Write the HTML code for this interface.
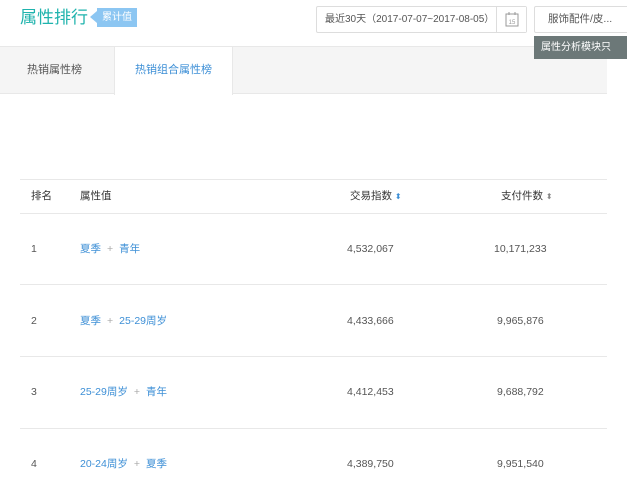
<!DOCTYPE html>
<html><head><meta charset="utf-8"><style>
*{margin:0;padding:0;box-sizing:border-box}
body{width:627px;height:485px;overflow:hidden;background:#fff;font-family:"Liberation Sans","Noto Sans CJK SC",sans-serif;position:relative;color:#555;font-size:11px}
.a{position:absolute}
.title{left:20px;top:7px;font-size:17px;color:#1fb3ad;line-height:22px}
.badge{left:97px;top:8px;width:40px;height:19px;background:#8cc6f2;color:#fff;font-size:10px;line-height:19px;text-align:center}
.badge:before{content:"";position:absolute;left:-7px;top:3px;border:6px solid transparent;border-right:7px solid #8cc6f2;border-left:0;height:0}
.date{left:316px;top:6px;width:211px;height:27px;border:1px solid #ddd;border-radius:2px;line-height:25px;padding-left:8px;color:#555;font-size:10px;white-space:nowrap}
.cal{position:absolute;right:0;top:0;width:30px;height:25px;border-left:1px solid #ddd;background:#fff}
.cat{left:534px;top:6px;width:100px;height:27px;border:1px solid #ddd;border-radius:2px;line-height:25px;padding-left:13px;color:#555;font-size:10.5px}
.tip{left:534px;top:36px;width:93px;height:23px;background:#6c7878;color:#fff;font-size:10px;line-height:23px;padding-left:7px;z-index:5;white-space:nowrap;overflow:hidden}
.tip:before{content:"";position:absolute;left:20px;top:-5px;border:5px solid transparent;border-bottom:5px solid #6c7878;border-top:0}
.tabs{left:0;top:46px;width:607px;height:48px;background:#f5f5f5;border-top:1px solid #e8e8e8;border-bottom:1px solid #e8e8e8}
.tab{position:absolute;top:0;height:47px;line-height:46px;font-size:11px;color:#555}
.act{left:114px;width:119px;background:#fff;color:#3d8fd6;text-align:center;border-left:1px solid #e8e8e8;border-right:1px solid #e8e8e8;height:48px}
.hl{left:20px;width:587px;height:1px;background:#e8e8e8}
.t{position:absolute;font-size:10.5px;line-height:14px}
.b{color:#3d8fd6}
.p{color:#aaa;margin:0 6px}
.h{color:#333}
</style></head><body>
<div class="a title">属性排行</div>
<div class="a badge">累计值</div>
<div class="a date">最近30天（2017-07-07~2017-08-05）<div class="cal"><svg width="30" height="25"><rect x="9" y="7" width="12" height="12" fill="none" stroke="#999"/><line x1="12" y1="5" x2="12" y2="8" stroke="#999"/><line x1="18" y1="5" x2="18" y2="8" stroke="#999"/><text x="15" y="17" font-size="6" fill="#999" text-anchor="middle" font-family="Liberation Sans">15</text></svg></div></div>
<div class="a cat">服饰配件/皮...</div>
<div class="a tabs"><div class="tab" style="left:27px">热销属性榜</div><div class="tab act">热销组合属性榜</div></div>
<div class="a tip">属性分析模块只</div>
<div class="a hl" style="top:179px"></div>
<div class="a hl" style="top:213px"></div>
<div class="a hl" style="top:284px"></div>
<div class="a hl" style="top:356px"></div>
<div class="a hl" style="top:428px"></div>
<div class="t h" style="left:31px;top:189px">排名</div>
<div class="t h" style="left:80px;top:189px">属性值</div>
<div class="t h" style="left:350px;top:189px">交易指数 <span style="color:#3d8fd6;font-size:8px">⬍</span></div>
<div class="t h" style="left:501px;top:189px">支付件数 <span style="color:#888;font-size:8px">⬍</span></div>

<div class="t" style="left:31px;top:242px">1</div><div class="t b" style="left:80px;top:242px">夏季<span class="p">+</span>青年</div><div class="t" style="left:347px;top:242px">4,532,067</div><div class="t" style="left:494px;top:242px">10,171,233</div>
<div class="t" style="left:31px;top:314px">2</div><div class="t b" style="left:80px;top:314px">夏季<span class="p">+</span>25-29周岁</div><div class="t" style="left:347px;top:314px">4,433,666</div><div class="t" style="left:497px;top:314px">9,965,876</div>
<div class="t" style="left:31px;top:385px">3</div><div class="t b" style="left:80px;top:385px">25-29周岁<span class="p">+</span>青年</div><div class="t" style="left:347px;top:385px">4,412,453</div><div class="t" style="left:497px;top:385px">9,688,792</div>
<div class="t" style="left:31px;top:457px">4</div><div class="t b" style="left:80px;top:457px">20-24周岁<span class="p">+</span>夏季</div><div class="t" style="left:347px;top:457px">4,389,750</div><div class="t" style="left:497px;top:457px">9,951,540</div>
</body></html>
